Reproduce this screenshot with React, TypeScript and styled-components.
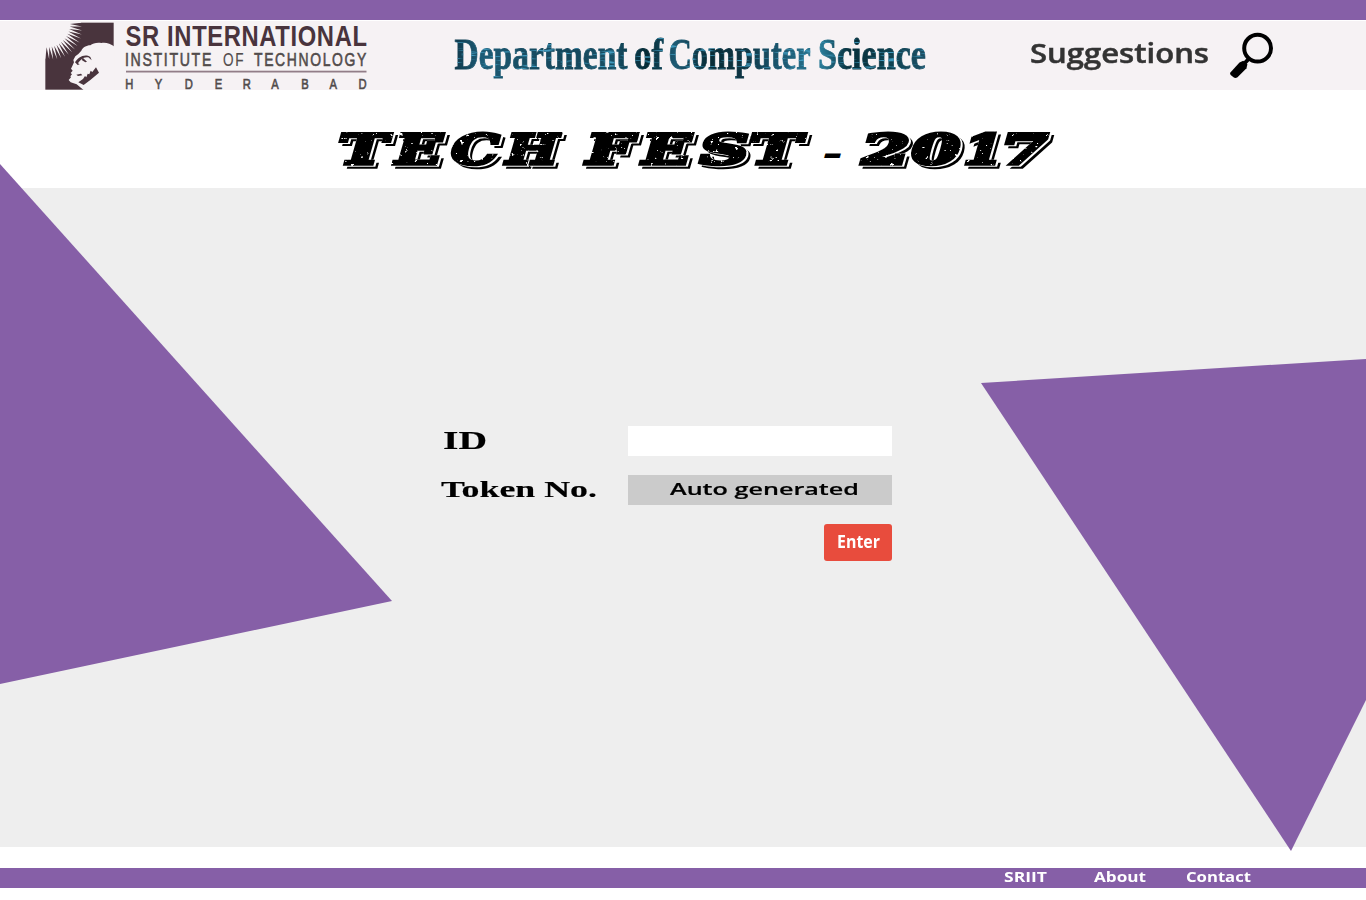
import React, { useLayoutEffect, useRef, useState } from 'react';
import styled, { createGlobalStyle } from 'styled-components';

const purple = '#865fa7';

const GlobalStyle = createGlobalStyle`
  *, *::before, *::after { box-sizing: border-box; }
  body { margin: 0; background: #fff; color: #000; font-family: 'Open Sans', 'Noto Sans', sans-serif; }
`;

const Page = styled.div`
  position: relative;
  width: 1366px;
  height: 900px;
  overflow: hidden;
  display: flex;
  flex-direction: column;
`;

const TopBar = styled.div`
  flex: none;
  height: 20px;
  background: ${purple};
`;

const Header = styled.header`
  flex: none;
  display: flex;
  align-items: flex-start;
  height: 69px;
  margin-top: 1px;
  padding-left: 45px;
  background: #f6f2f4;
`;

const LogoLink = styled.a`
  display: block;
  width: 324px;
  height: 69px;
`;

const Department = styled.div`
  width: 480px;
  height: 69px;
  margin-left: 82px;
`;

const Suggestions = styled.a`
  display: flex;
  margin: 8px 0 0 99px;
  gap: 20px;
  color: #333;
  -webkit-text-stroke: 0.5px #333;

  svg {
    margin-top: 3px;
  }
`;

const Banner = styled.h1`
  flex: none;
  height: 98px;
  margin: 0;
  padding-left: 330px;
`;

const Main = styled.main`
  flex: none;
  height: 659px;
  padding: 238px 0 0 441px;
  background: #eee;
`;

const Shapes = styled.svg`
  position: absolute;
  inset: 0;
  pointer-events: none;
`;

const Form = styled.form`
  position: relative;
  display: flex;
  flex-direction: column;
  gap: 19px;
  width: 451px;
`;

const Field = styled.div`
  display: flex;
  justify-content: space-between;
  height: 30px;
`;

const Label = styled.label<{ $indent?: number }>`
  padding-left: ${(p) => p.$indent ?? 0}px;
  -webkit-text-stroke: 0.15px #000;
`;

const Input = styled.input`
  width: 264px;
  height: 30px;
  border: 0;
  padding: 0 10px;
  background: #fff;
  font: 16px 'Open Sans', sans-serif;
`;

const TokenBox = styled.output`
  display: block;
  width: 264px;
  height: 30px;
  padding-left: 42px;
  background: #cbcbcb;
  -webkit-text-stroke: 0.2px #000;
`;

const EnterButton = styled.button`
  align-self: flex-end;
  width: 68px;
  height: 37px;
  border: 0;
  border-radius: 3px;
  padding: 0 0 2px 13px;
  background: #e84c3d;
  color: #fff;
  text-align: left;
`;

const Footer = styled.footer`
  flex: none;
  display: flex;
  height: 20px;
  margin-top: 21px;
  padding-left: 1004px;
  background: ${purple};
  color: #fff;
`;

const FooterLink = styled.a<{ $gap?: number }>`
  margin-left: ${(p) => p.$gap ?? 0}px;
`;

type TextProps = { $width: number; $size: number; $line: number; $weight: number; $serif?: boolean };

const FitBox = styled.span<TextProps>`
  display: block;
  width: ${(p) => p.$width}px;
  height: ${(p) => p.$line}px;
  font-family: ${(p) => (p.$serif ? "'Liberation Serif', serif" : "'Open Sans', sans-serif")};
  font-size: ${(p) => p.$size}px;
  font-weight: ${(p) => p.$weight};
  line-height: ${(p) => p.$line}px;
`;

const FitInner = styled.span`
  display: inline-block;
  white-space: nowrap;
  transform-origin: 0 50%;
`;

/* Expands its text horizontally to fill the given width. */
function FitText({ width, size, line, weight = 700, serif, children }: {
  width: number; size: number; line: number; weight?: number; serif?: boolean; children: string;
}) {
  const ref = useRef<HTMLSpanElement>(null);
  const [scale, setScale] = useState(1);
  useLayoutEffect(() => {
    const el = ref.current;
    if (!el) return;
    el.style.transform = 'none';
    const natural = el.getBoundingClientRect().width;
    el.style.transform = `scaleX(${width / natural})`;
    setScale(width / natural);
  }, [width, size, children]);
  return (
    <FitBox $width={width} $size={size} $line={line} $weight={weight} $serif={serif}>
      <FitInner ref={ref} style={{ transform: `scaleX(${scale})` }}>{children}</FitInner>
    </FitBox>
  );
}

function sunburst() {
  const points: string[] = ['22,20', '130,20'];
  const count = 15;
  for (let i = 0; i <= count; i++) {
    const a = (i / count) * (Math.PI / 2);
    const tip = 108 + 12 * Math.sin(a * 2);
    points.push(`${(28 + tip * Math.cos(a)).toFixed(1)},${(26 + tip * Math.sin(a)).toFixed(1)}`);
    if (i < count) {
      const b = ((i + 0.5) / count) * (Math.PI / 2);
      points.push(`${(28 + 74 * Math.cos(b)).toFixed(1)},${(26 + 74 * Math.sin(b)).toFixed(1)}`);
    }
  }
  points.push('22,134');
  return points.join(' ');
}

function CollegeLogo() {
  return (
    <svg width="324" height="69" viewBox="45 21 324 69" role="img" aria-label="SR International Institute of Technology">
      <g transform="translate(36 14) scale(.33333)">
        <rect x="28" y="26" width="205" height="201" fill="#49343d" />
        <polygon points={sunburst()} fill="#f6f2f4" />
        <path
          d="M236 98 C222 88 208 84 196 87 C182 85 170 88 163 94 C151 94 140 101 136 110 L127 120 L118 127 L112 138 L114 145 L109 156 L105 164 L110 170 L104 177 L108 181 L103 187 L105 190 L98 198 L104 205 L122 211 L145 230 L236 230 Z"
          fill="#f6f2f4"
        />
        <path d="M117 145 C126 130 146 118 163 129 L167 139 L157 130 C143 127 132 138 126 148 L131 151 L125 153 Z M141 132 L153 143 L148 145 L137 138 Z" fill="#49343d" />
        <path d="M121 182 L135 179 L139 184 L126 186 Z" fill="#49343d" />
        <path d="M141 195 L147 186 L151 190 L155 179 L160 181 L164 170 L169 174 L180 160 L189 176 L163 198 L143 213 L127 205 Z" fill="#49343d" />
      </g>
      <g fontFamily="'Liberation Sans', sans-serif">
        <text x="125.6" y="45.6" fontSize="30" fontWeight="700" fill="#49343d" textLength="242" lengthAdjust="spacingAndGlyphs" letterSpacing=".8">SR INTERNATIONAL</text>
        <g fontSize="18.8" fill="#514b4b" stroke="#514b4b" strokeWidth=".6">
          <text x="125" y="65.8" textLength="88" lengthAdjust="spacingAndGlyphs" letterSpacing="2.2">INSTITUTE</text>
          <text x="223" y="65.8" textLength="22" lengthAdjust="spacingAndGlyphs" letterSpacing="2.2" strokeWidth=".2">OF</text>
          <text x="254" y="65.8" textLength="114" lengthAdjust="spacingAndGlyphs" letterSpacing="2.2">TECHNOLOGY</text>
        </g>
        <rect x="126" y="70.7" width="240.5" height="1.8" fill="#927e88" />
        <g transform="scale(.8 1)">
          <text x="156.5 193.4 231 268.5 303.5 339 376.5 412 448" y="89" fontSize="14" fill="#514b4b" stroke="#514b4b" strokeWidth=".6">HYDERABAD</text>
        </g>
      </g>
    </svg>
  );
}

const departmentWords: [string, number, number][] = [
  ['Department', 455.5, 173],
  ['of', 635, 29],
  ['Computer', 669.5, 142],
  ['Science', 819, 108],
];

function DepartmentTitle() {
  return (
    <svg width="480" height="69" viewBox="452 21 480 69">
      <defs>
        <linearGradient id="teal" gradientUnits="userSpaceOnUse" x1="455" x2="926" y1="0" y2="0">
          <stop offset="0" stopColor="#10394b" />
          <stop offset=".06" stopColor="#1d5c76" />
          <stop offset=".14" stopColor="#184e64" />
          <stop offset=".24" stopColor="#15475c" />
          <stop offset=".34" stopColor="#184f64" />
          <stop offset=".41" stopColor="#042a35" />
          <stop offset=".47" stopColor="#1d5a73" />
          <stop offset=".54" stopColor="#072c37" />
          <stop offset=".61" stopColor="#0e3543" />
          <stop offset=".7" stopColor="#1d5a73" />
          <stop offset=".78" stopColor="#2a7a96" />
          <stop offset=".84" stopColor="#062f3b" />
          <stop offset=".92" stopColor="#0f404e" />
          <stop offset="1" stopColor="#1b5066" />
        </linearGradient>
        <filter id="streaks" filterUnits="userSpaceOnUse" x="452" y="21" width="480" height="69" colorInterpolationFilters="sRGB">
          <feTurbulence type="fractalNoise" baseFrequency=".05 .5" numOctaves="2" seed="4" result="noise" />
          <feColorMatrix in="noise" values="0 0 0 0 .25  0 0 0 0 .6  0 0 0 0 .74  5 0 0 0 -2.8" result="light" />
          <feComposite in="light" in2="SourceGraphic" operator="in" result="cut" />
          <feMerge><feMergeNode in="SourceGraphic" /><feMergeNode in="cut" /></feMerge>
        </filter>
      </defs>
      <g fontFamily="'Liberation Serif', serif" fontSize="44" fontWeight="700" fill="url(#teal)" stroke="url(#teal)" strokeWidth=".8" filter="url(#streaks)">
        {departmentWords.map(([word, x, width]) => (
          <text key={word} x={x} y="68.5" textLength={width} lengthAdjust="spacingAndGlyphs">{word}</text>
        ))}
      </g>
    </svg>
  );
}

function SearchIcon() {
  return (
    <svg width="45" height="48" viewBox="1229 32 45 48" aria-hidden="true">
      <circle cx="1257.6" cy="48.2" r="13.4" fill="none" stroke="#000" strokeWidth="4" />
      <path d="M1249 58.5 L1244 64" stroke="#000" strokeWidth="4" />
      <path d="M1230.4 72.5 L1239.5 62.4 L1243.2 60.8 L1247.4 64.3 L1246.5 68.2 L1237.5 77.2 Q1235.5 78.5 1233.5 77.3 L1230.7 75 Q1229.5 73.8 1230.4 72.5 Z" fill="#000" />
    </svg>
  );
}

const festLetters: [string, number, number][] = [
  ['T', 334, 49], ['E', 391, 47], ['C', 447, 48], ['H', 502, 52],
  ['F', 582, 47], ['E', 638, 49], ['S', 695, 50], ['T', 745, 52],
  ['2', 857, 49], ['0', 907, 49], ['1', 959, 40], ['7', 996, 48],
];

function FestTitle() {
  return (
    <svg width="740" height="98" viewBox="330 90 740 98">
      <defs>
        <filter id="worn" filterUnits="userSpaceOnUse" x="330" y="120" width="740" height="60" colorInterpolationFilters="sRGB">
          <feTurbulence type="fractalNoise" baseFrequency=".2 .3" numOctaves="4" seed="12" result="noise" />
          <feColorMatrix in="noise" values="0 0 0 0 0  0 0 0 0 0  0 0 0 0 0  12 0 0 0 -8.5" result="specks" />
          <feComposite in="SourceGraphic" in2="specks" operator="out" result="face" />
          <feOffset in="SourceAlpha" dx="4" dy="3" result="drop" />
          <feOffset in="SourceAlpha" dx="2" dy="1.3" result="gap" />
          <feComposite in="drop" in2="gap" operator="out" result="edge" />
          <feComposite in="edge" in2="SourceAlpha" operator="out" result="rim" />
          <feMerge><feMergeNode in="rim" /><feMergeNode in="face" /></feMerge>
        </filter>
      </defs>
      <g filter="url(#worn)">
        <g transform="translate(0 163.6) skewX(-16)" fontFamily="'DejaVu Serif', serif" fontSize="41.5" fontWeight="700" stroke="#000" strokeWidth="3.4">
          {festLetters.map(([letter, x, width]) => (
            <text key={x} x={x} textLength={width} lengthAdjust="spacingAndGlyphs">{letter}</text>
          ))}
        </g>
      </g>
      <text x="822" y="165" fontFamily="'DejaVu Serif', serif" fontSize="34" fontStyle="italic" fontWeight="700" textLength="21" lengthAdjust="spacingAndGlyphs">-</text>
    </svg>
  );
}

export default function App() {
  return (
    <>
      <GlobalStyle />
      <Page>
        <TopBar />
        <Header>
          <LogoLink><CollegeLogo /></LogoLink>
          <Department><DepartmentTitle /></Department>
          <Suggestions>
            <FitText width={179} size={27.5} line={48} weight={600}>Suggestions</FitText>
            <SearchIcon />
          </Suggestions>
        </Header>
        <Banner><FestTitle /></Banner>
        <Shapes width="1366" height="900" viewBox="0 0 1366 900" aria-hidden="true">
          <polygon points="0,164 392,601 0,684" fill={purple} />
          <polygon points="981,383 1366,359 1366,700 1291,851" fill={purple} />
        </Shapes>
        <Main>
          <Form onSubmit={(e) => e.preventDefault()}>
            <Field>
              <Label htmlFor="student-id" $indent={2}>
                <FitText width={44} size={26} line={30} serif>ID</FitText>
              </Label>
              <Input id="student-id" />
            </Field>
            <Field>
              <Label><FitText width={156} size={23} line={30} serif>Token No.</FitText></Label>
              <TokenBox><FitText width={189} size={17} line={28} weight={600}>Auto generated</FitText></TokenBox>
            </Field>
            <EnterButton type="submit"><FitText width={43} size={17} line={35}>Enter</FitText></EnterButton>
          </Form>
        </Main>
        <Footer>
          <FooterLink><FitText width={43} size={14} line={18}>SRIIT</FitText></FooterLink>
          <FooterLink $gap={47}><FitText width={52} size={14} line={18}>About</FitText></FooterLink>
          <FooterLink $gap={40}><FitText width={65} size={14} line={18}>Contact</FitText></FooterLink>
        </Footer>
      </Page>
    </>
  );
}
